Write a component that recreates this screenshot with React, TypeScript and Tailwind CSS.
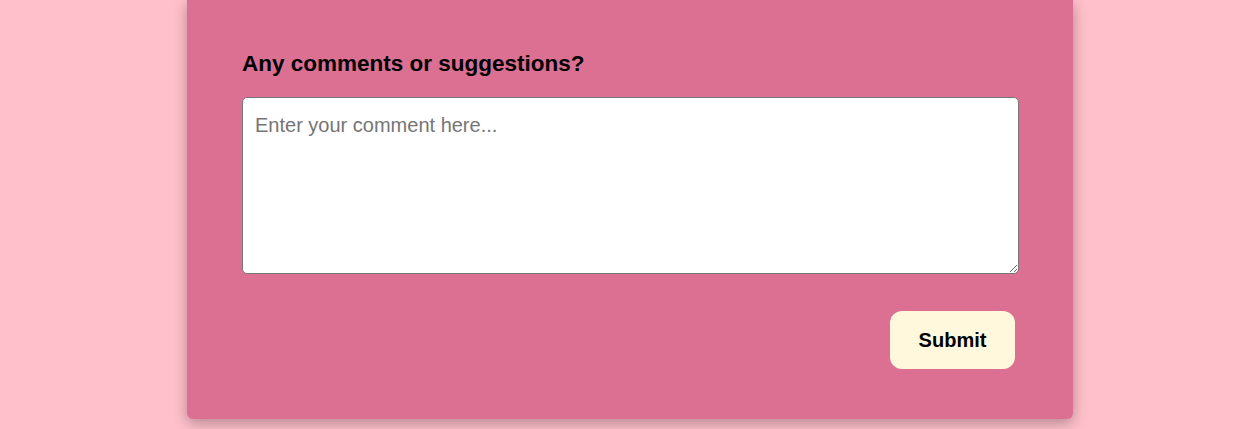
export default function App() {
  return (
    <div className="min-h-[429px] w-full bg-[#ffc0cb] pl-[5px] overflow-hidden" style={{ fontFamily: '"Liberation Sans", Arial, sans-serif' }}>
      <div className="mx-auto w-[886px] rounded-b-md bg-[#db7093] pl-[55px] pr-[54px] pt-[50px] pb-[50px] shadow-[0_4px_14px_rgba(0,0,0,0.3)]">
        <h2 className="text-[22.5px] leading-[28px] font-bold text-black">Any comments or suggestions?</h2>
        <textarea
          className="mt-[19px] block h-[177px] w-full rounded-[5px] border border-[#767676] bg-white px-[12px] py-[12px] text-[20px] text-black placeholder:text-[#757575] outline-none"
          placeholder="Enter your comment here..."
        />
        <div className="mt-[37px] flex justify-end pr-[4px]">
          <button className="h-[58px] w-[125px] rounded-[12px] bg-[#fff8dc] text-[20px] font-bold text-black">
            Submit
          </button>
        </div>
      </div>
    </div>
  );
}
